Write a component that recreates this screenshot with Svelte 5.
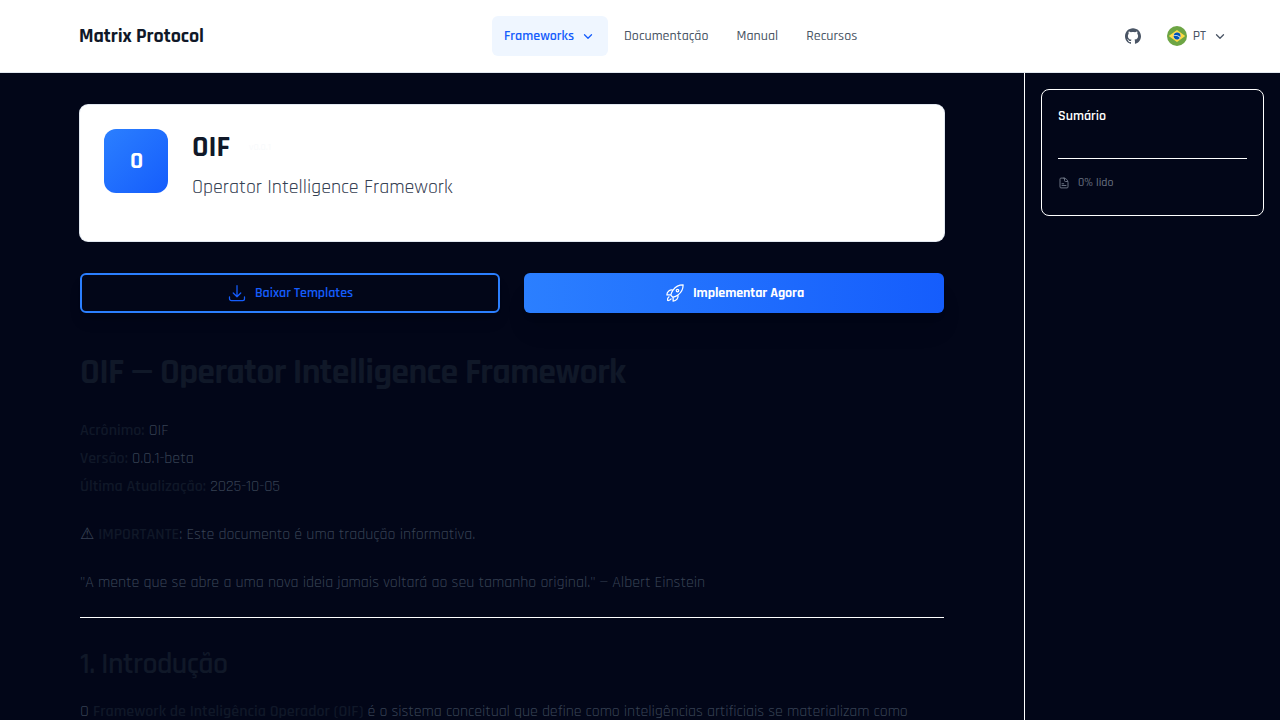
<script>
  const links = ['Documentação', 'Manual', 'Recursos'];
  const meta = [
    ['Acrônimo:', 'OIF'],
    ['Versão:', '0.0.1-beta'],
    ['Última Atualização:', '2025-10-05']
  ];
</script>

{#snippet chevron()}
  <svg class="chevron" viewBox="0 0 24 24" fill="none" stroke="currentColor" stroke-width="2.6" stroke-linecap="round" stroke-linejoin="round"><path d="m5 9.500 7 7 7-7" /></svg>
{/snippet}

<div class="page">
  <header>
    <div class="brand">Matrix Protocol</div>
    <nav>
      <button class="link active">Frameworks {@render chevron()}</button>
      {#each links as label}
        <button class="link">{label}</button>
      {/each}
    </nav>
    <div class="tools">
      <svg class="github" viewBox="0 0 24 24" fill="currentColor"><path d="M12 .297c-6.63 0-12 5.373-12 12 0 5.303 3.438 9.8 8.205 11.385.6.113.82-.258.82-.577 0-.285-.01-1.04-.015-2.04-3.338.724-4.042-1.61-4.042-1.61C4.422 18.07 3.633 17.7 3.633 17.7c-1.087-.744.084-.729.084-.729 1.205.084 1.838 1.236 1.838 1.236 1.07 1.835 2.809 1.305 3.495.998.108-.776.417-1.305.76-1.605-2.665-.3-5.466-1.332-5.466-5.93 0-1.31.465-2.38 1.235-3.22-.135-.303-.54-1.523.105-3.176 0 0 1.005-.322 3.3 1.23.96-.267 1.98-.399 3-.405 1.02.006 2.04.138 3 .405 2.28-1.552 3.285-1.23 3.285-1.23.645 1.653.24 2.873.12 3.176.765.84 1.23 1.91 1.23 3.22 0 4.61-2.805 5.625-5.475 5.92.42.36.81 1.096.81 2.22 0 1.606-.015 2.896-.015 3.286 0 .315.21.69.825.57C20.565 22.092 24 17.592 24 12.297c0-6.627-5.373-12-12-12" /></svg>
      <div class="lang">
        <svg class="flag" viewBox="0 0 512 512">
          <circle cx="256" cy="256" r="256" fill="#6da544" />
          <path fill="#ffda44" d="M256 100.2 467.5 256 256 411.8 44.5 256z" />
          <circle cx="256" cy="256" r="90" fill="#f0f0f0" />
          <path fill="#0052b4" d="M211.5 250.4c-15.5 0-30.4 2.4-44.5 6.7.6 48.7 40.2 88 89 88 30.2 0 56.9-15 73-38-27.600-34.600-70.100-56.700-117.500-56.700zm131.700 21a89 89 0 0 0-174.200-36.200 185 185 0 0 1 42.500-5c51.800 0 98.700 21.100 132.500 55.100z" />
        </svg>
        <span>PT</span>
        {@render chevron()}
      </div>
    </div>
  </header>

  <div class="body">
    <main>
      <section class="hero">
        <div class="tile">O</div>
        <div>
          <div class="title-row"><div class="title">OIF</div><span class="version">v0.0.1</span></div>
          <p class="subtitle">Operator Intelligence Framework</p>
        </div>
      </section>

      <div class="actions">
        <button class="action outline">
          <svg viewBox="0 0 24 24" fill="none" stroke="currentColor" stroke-width="1.5" stroke-linecap="round" stroke-linejoin="round"><path d="M3 16.500v2.250A2.250 2.250 0 0 0 5.250 21h13.500A2.250 2.250 0 0 0 21 18.750V16.500M16.500 12 12 16.500m0 0L7.500 12m4.500 4.500V3" /></svg>
          Baixar Templates
        </button>
        <button class="action solid">
          <svg viewBox="0 0 24 24" fill="none" stroke="currentColor" stroke-width="1.5" stroke-linecap="round" stroke-linejoin="round"><path d="M15.590 14.370a6 6 0 0 1-5.840 7.380v-4.800m5.840-2.580a14.980 14.980 0 0 0 6.160-12.120A14.980 14.980 0 0 0 9.631 8.410m5.960 5.960a14.926 14.926 0 0 1-5.841 2.580m-.119-8.540a6 6 0 0 0-7.381 5.840h4.800m2.581-5.840a14.927 14.927 0 0 0-2.580 5.840m2.699 2.700c-.103.021-.207.041-.311.060a15.090 15.090 0 0 1-2.448-2.448 14.900 14.900 0 0 1 .060-.312m-2.240 2.390a4.493 4.493 0 0 0-1.757 4.306 4.493 4.493 0 0 0 4.306-1.758M16.500 9a1.500 1.500 0 1 1-3 0 1.500 1.500 0 0 1 3 0Z" /></svg>
          Implementar Agora
        </button>
      </div>

      <article>
        <h1>OIF — Operator Intelligence Framework</h1>
        <p>
          {#each meta as [key, value], i}
            <strong>{key}</strong> {value}{#if i < meta.length - 1}<br />{/if}
          {/each}
        </p>
        <p>⚠ <strong>IMPORTANTE</strong>: Este documento é uma tradução informativa.</p>
        <p>"A mente que se abre a uma nova ideia jamais voltará ao seu tamanho original." — Albert Einstein</p>
        <hr />
        <h2>1. Introdução</h2>
        <p class="intro">O <strong>Framework de Inteligência Operador (OIF)</strong> é o sistema conceitual que define como inteligências artificiais se materializam como</p>
      </article>
    </main>

    <aside>
      <div class="toc">
        <div class="toc-title">Sumário</div>
        <div class="progress">
          <svg viewBox="0 0 24 24" fill="none" stroke="currentColor" stroke-width="2" stroke-linecap="round" stroke-linejoin="round"><path d="M13 2.200H6a2 2 0 0 0-2 2v15.600a2 2 0 0 0 2 2h12a2 2 0 0 0 2-2V11a8.800 8.800 0 0 0-8.800-8.800M13 3v4a2 2 0 0 0 2 2h4M8 13.500h3.500M8 17h8" /></svg>
          0% lido
        </div>
      </div>
    </aside>
  </div>
</div>

<style>
  :global(body) { margin: 0; background: #020618; }
  .page {
    width: 1280px; height: 720px; overflow: hidden;
    display: flex; flex-direction: column;
    background: #020618; color: #364153;
    font-family: Rajdhani, Roboto, sans-serif;
    box-sizing: border-box;
  }
  .page :is(div, header, main, aside, section, button) { box-sizing: border-box; }
  button { font: inherit; border: 0; background: none; margin: 0; }
  svg { display: block; flex: none; }
  p { margin: 0; }

  header {
    flex: none; height: 73px; padding: 0 54px 0 79px;
    display: grid; grid-template-columns: 413px 1fr auto; align-items: center;
    background: #fff; border-bottom: 1px solid #e2e8f0;
  }
  .brand { font-size: 20px; line-height: 28px; font-weight: 700; letter-spacing: -0.06px; color: #101828; }
  nav { display: flex; gap: 4px; }
  .link {
    display: flex; align-items: center; gap: 8px;
    height: 40px; padding: 0 12px; border-radius: 6px;
    font-size: 14px; font-weight: 500; letter-spacing: 0.03px; color: #4a5565; white-space: nowrap;
  }
  .link.active { background: #eff6ff; color: #155dfc; font-weight: 600; letter-spacing: 0; padding-right: 14px; }
  .chevron { width: 12px; height: 12px; }
  .tools { display: flex; align-items: center; gap: 26px; color: #4a5565; }
  .github { width: 16px; height: 16px; }
  .lang { display: flex; align-items: center; gap: 6px; font-size: 14px; font-weight: 500; }
  .lang .chevron { margin-left: 2px; }
  .flag { width: 20px; height: 20px; }

  .body { flex: 1; min-height: 0; display: grid; grid-template-columns: 1024px 1fr; }
  main { padding: 32px 80px 0; overflow: hidden; }
  .hero {
    display: flex; gap: 24px; height: 136px; padding: 24px;
    background: #fff; border-radius: 8px; box-shadow: 0 0 0 1px #e2e8f0;
  }
  .tile {
    width: 64px; height: 64px; border-radius: 12px; padding-left: 1px;
    display: flex; align-items: center; justify-content: center;
    background: linear-gradient(135deg, #2b7fff, #155dfc);
    color: #fff; font-size: 24px; font-weight: 700;
  }
  .title-row { display: flex; align-items: center; gap: 12px; height: 36px; }
  .title { font-size: 30px; line-height: 36px; font-weight: 700; color: #101828; }
  .version { font-size: 10px; font-weight: 500; color: #f8fafc; padding: 0 7px; }
  .subtitle { margin-top: 8px; font-size: 20px; line-height: 28px; font-weight: 400; letter-spacing: -0.05px; color: #364153; }

  .actions { display: grid; grid-template-columns: 1fr 1fr; gap: 24px; margin-top: 32px; }
  .action {
    display: flex; align-items: center; justify-content: center; gap: 8px;
    height: 40px; border-radius: 6px; font-size: 14px;
  }
  .action svg { width: 20px; height: 20px; }
  .outline { border: 2px solid #2b7fff; color: #155dfc; font-weight: 600; letter-spacing: -0.06px; box-shadow: 0 10px 15px -3px rgb(0 0 0 / 0.1), 0 4px 6px -4px rgb(0 0 0 / 0.1); }
  .solid {
    padding-left: 7px; color: #fff; font-weight: 700; letter-spacing: -0.08px;
    background: linear-gradient(90deg, #2b7fff, #155dfc);
    box-shadow: 0 20px 25px -5px rgb(0 0 0 / 0.1), 0 8px 10px -6px rgb(0 0 0 / 0.1);
  }

  article { margin-top: 40px; font-size: 16px; line-height: 28px; font-weight: 400; letter-spacing: -0.06px; }
  article p { margin-bottom: 20px; white-space: nowrap; }
  article strong { font-weight: 600; letter-spacing: 0; color: #101828; }
  article .intro { letter-spacing: -0.1px; }
  h1 { margin: 0 0 24px; font-size: 36px; line-height: 40px; font-weight: 700; letter-spacing: -0.02em; color: #101828; }
  h2 { margin: 0 0 16px; font-size: 30px; line-height: 36px; font-weight: 600; letter-spacing: -0.02em; color: #101828; }
  hr { margin: 0 0 28px; border: 0; border-top: 1px solid #fff; }

  aside { padding: 16px 16px 0; border-left: 1px solid #fff; }
  .toc { height: 127px; padding: 15px 16px; border: 1px solid #fff; border-radius: 8px; }
  .toc-title { height: 54px; font-size: 14px; line-height: 22px; font-weight: 600; color: #fff; border-bottom: 1px solid #fff; }
  .progress { display: flex; align-items: center; gap: 8px; margin-top: 16px; font-size: 12px; line-height: 16px; font-weight: 500; color: #6a7282; }
  .progress svg { width: 12px; height: 12px; }
</style>
